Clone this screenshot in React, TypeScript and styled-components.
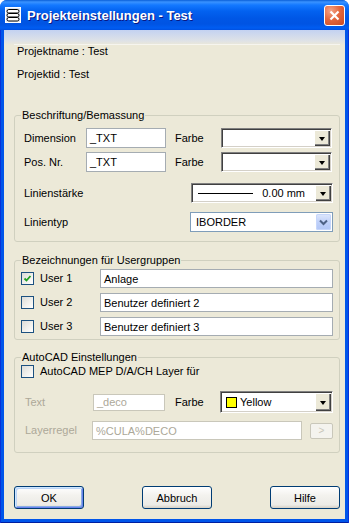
import styled, { createGlobalStyle } from "styled-components";

const GlobalStyle = createGlobalStyle`
  html, body {
    margin: 0;
    padding: 0;
    background: #ffffff;
  }
  body {
    font-family: "Liberation Sans", Arial, sans-serif;
    font-size: 11px;
    color: #000;
  }
`;

const Window = styled.div`
  width: 349px;
  height: 523px;
  display: flex;
  flex-direction: column;
  border-radius: 7px 7px 0 0;
  overflow: hidden;
  background: #0055ea;
`;

const TitleBar = styled.div`
  height: 30px;
  flex: none;
  display: flex;
  align-items: center;
  padding: 0 4px 0 5px;
  background: linear-gradient(
    to bottom,
    #0a5fd8 0px,
    #3a93ff 2px,
    #1479ff 5px,
    #0362f0 11px,
    #0057e6 18px,
    #0054e3 24px,
    #005df2 28px,
    #0050e0 30px
  );
`;

const TitleText = styled.div`
  flex: 1;
  margin-left: 6px;
  font-family: "Liberation Sans Narrow", "Liberation Sans", Arial, sans-serif;
  font-weight: bold;
  font-size: 13px;
  color: #fff;
  text-shadow: 1px 1px 0 #0a1883;
`;

const CloseButton = styled.div`
  width: 21px;
  height: 21px;
  box-sizing: border-box;
  border: 1px solid #fff;
  border-radius: 3px;
  display: flex;
  align-items: center;
  justify-content: center;
  background: radial-gradient(circle at 30% 25%, #f4a488 0%, #e4683f 45%, #c94a22 100%);
`;

const Frame = styled.div`
  flex: 1;
  display: flex;
  padding: 0 4px 4px 4px;
  background: #0055ea;
  box-shadow: inset 1px 0 0 #0831d9, inset -1px 0 0 #0831d9, inset 0 -1px 0 #001ea0;
`;

const Client = styled.div`
  flex: 1;
  display: flex;
  flex-direction: column;
  padding: 15px 5px 0 10px;
  background: linear-gradient(to bottom, #c3d2f1 0px, #dfe2e6 11px, #ece9d8 15px);
`;

const Info = styled.div`
  display: flex;
  flex-direction: column;
  gap: 10px;
  padding-left: 3px;
  line-height: 13px;
  border-top: 1px solid #f6f5ef;
  margin-top: -1px;
`;

const Group = styled.fieldset<{ $mt: number; $pt: number; $pb: number }>`
  margin: ${(p) => p.$mt}px 0 0 0;
  padding: ${(p) => p.$pt}px 6px ${(p) => p.$pb}px 6px;
  border: 1px solid #d0d0bf;
  border-radius: 3px;
  min-inline-size: 0;
  display: flex;
  flex-direction: column;
`;

const Legend = styled.legend`
  padding: 0 1px;
  line-height: 13px;
  font-size: 11px;
`;

const Row = styled.div<{ $mt?: number; $h?: number }>`
  display: flex;
  align-items: center;
  height: ${(p) => p.$h ?? 20}px;
  margin-top: ${(p) => p.$mt ?? 0}px;
`;

const Label = styled.span<{ $w?: number; $ml?: number; $disabled?: boolean }>`
  width: ${(p) => (p.$w ? `${p.$w}px` : "auto")};
  flex: ${(p) => (p.$w ? "none" : 1)};
  margin-left: ${(p) => p.$ml ?? 0}px;
  color: ${(p) => (p.$disabled ? "#aca899" : "#000")};
  white-space: nowrap;
  line-height: 13px;
`;

const TextBox = styled.div<{ $w: number; $h?: number; $disabled?: boolean }>`
  width: ${(p) => p.$w}px;
  height: ${(p) => p.$h ?? 20}px;
  box-sizing: border-box;
  flex: none;
  border: 1px solid ${(p) => (p.$disabled ? "#c9c7ba" : "#a5acb2")};
  background: #fff;
  padding-left: 3px;
  display: flex;
  align-items: center;
  color: ${(p) => (p.$disabled ? "#aca899" : "#000")};
  white-space: nowrap;
`;

const ClassicCombo = styled.div<{ $w: number; $h?: number }>`
  width: ${(p) => p.$w}px;
  height: ${(p) => p.$h ?? 20}px;
  box-sizing: border-box;
  flex: none;
  display: flex;
  border: 1px solid;
  border-color: #808080 #ffffff #ffffff #808080;
  padding: 1px;
  background: #fff;
  box-shadow: inset 1px 1px 0 #404040, inset -1px -1px 0 #d4d0c8;
`;

const ComboValue = styled.div`
  flex: 1;
  display: flex;
  align-items: center;
  padding-left: 4px;
  white-space: nowrap;
  overflow: hidden;
`;

const ClassicButton = styled.div`
  width: 16px;
  flex: none;
  display: flex;
  align-items: center;
  justify-content: center;
  background: #ece9d8;
  box-shadow: inset 1px 1px 0 #fff, inset -1px -1px 0 #404040, inset -2px -2px 0 #808080;
`;

const Arrow = styled.span`
  width: 0;
  height: 0;
  border-left: 3.5px solid transparent;
  border-right: 3.5px solid transparent;
  border-top: 4px solid #000;
  margin-top: 1px;
`;

const XPCombo = styled.div<{ $w: number }>`
  width: ${(p) => p.$w}px;
  height: 20px;
  box-sizing: border-box;
  flex: none;
  display: flex;
  border: 1px solid #7f9db9;
  padding: 1px;
  background: #fff;
`;

const XPButton = styled.div`
  width: 15px;
  flex: none;
  border-radius: 2px;
  display: flex;
  align-items: center;
  justify-content: center;
  background: linear-gradient(to bottom, #dfe8fd, #c0d1f9 50%, #b1c6f6);
  box-shadow: inset 0 0 0 1px #c6d6fb;
`;

const Swatch = styled.span`
  width: 9px;
  height: 9px;
  border: 1px solid #000;
  background: #ffff00;
  margin-right: 3px;
  flex: none;
`;

const LineSample = styled.span`
  width: 55px;
  height: 1px;
  background: #000;
  margin-left: 1px;
  flex: none;
`;

const WidthValue = styled.span`
  flex: 1;
  text-align: right;
  padding-right: 10px;
`;

const CheckBox = styled.span`
  width: 13px;
  height: 13px;
  box-sizing: border-box;
  flex: none;
  border: 1px solid #1c5180;
  background: linear-gradient(135deg, #dcdcd7 0%, #f2f2ef 60%, #ffffff 100%);
  display: flex;
  align-items: center;
  justify-content: center;
`;

const SmallButton = styled.div`
  width: 23px;
  height: 16px;
  box-sizing: border-box;
  margin-left: 8px;
  flex: none;
  border: 1px solid #c9c7ba;
  border-radius: 2px;
  background: #f4f3ee;
  color: #c9c7ba;
  display: flex;
  align-items: center;
  justify-content: center;
  font-size: 10px;
`;

const ButtonRow = styled.div`
  display: flex;
  justify-content: space-between;
  margin-top: 33px;
`;

const PushButton = styled.div<{ $default?: boolean }>`
  width: 70px;
  height: 23px;
  box-sizing: border-box;
  border: 1px solid #003c74;
  border-radius: 3px;
  display: flex;
  align-items: center;
  justify-content: center;
  background: linear-gradient(to bottom, #ffffff 0%, #f3f2ee 40%, #ecebe6 85%, #d6d0c5 100%);
  box-shadow: ${(p) =>
    p.$default
      ? "inset 1px 1px 0 #cee7ff, inset -1px -1px 0 #6982ee, inset 2px 2px 0 #bcd4f6, inset -2px -2px 0 #89ade4"
      : "none"};
`;

function AppIcon() {
  return (
    <svg width="16" height="16" viewBox="0 0 16 16">
      <rect x="0.5" y="0.5" width="15" height="15" fill="#dfe6f2" stroke="#ffffff" />
      <rect x="2" y="2.5" width="12" height="3.5" rx="1.75" fill="#fff" stroke="#000" />
      <rect x="2" y="6.5" width="12" height="3.5" rx="1.75" fill="#fff" stroke="#000" />
      <rect x="2" y="10.5" width="12" height="3.5" rx="1.75" fill="#fff" stroke="#000" />
    </svg>
  );
}

function Check({ checked }: { checked?: boolean }) {
  return (
    <CheckBox>
      {checked && (
        <svg width="9" height="9" viewBox="0 0 9 9">
          <path d="M1.5 4.5 L3.5 6.5 L7.5 2" fill="none" stroke="#21a121" strokeWidth="1.8" />
        </svg>
      )}
    </CheckBox>
  );
}

function Chevron() {
  return (
    <svg width="9" height="7" viewBox="0 0 9 7">
      <path d="M1 1.5 L4.5 5 L8 1.5" fill="none" stroke="#4d6185" strokeWidth="2" />
    </svg>
  );
}

const users = [
  { name: "User 1", value: "Anlage", checked: true },
  { name: "User 2", value: "Benutzer definiert 2" },
  { name: "User 3", value: "Benutzer definiert 3" },
];

export default function App() {
  return (
    <>
      <GlobalStyle />
      <Window>
        <TitleBar>
          <AppIcon />
          <TitleText>Projekteinstellungen - Test</TitleText>
          <CloseButton>
            <svg width="11" height="11" viewBox="0 0 11 11">
              <path d="M1.5 1.5 L9.5 9.5 M9.5 1.5 L1.5 9.5" stroke="#fff" strokeWidth="2.2" />
            </svg>
          </CloseButton>
        </TitleBar>
        <Frame>
          <Client>
            <Info>
              <span>Projektname : Test</span>
              <span>Projektid : Test</span>
            </Info>

            <Group $mt={28} $pt={6} $pb={9}>
              <Legend>Beschriftung/Bemassung</Legend>
              <Row>
                <Label $w={62} $ml={3}>Dimension</Label>
                <TextBox $w={80}>_TXT</TextBox>
                <Label $w={46} $ml={9}>Farbe</Label>
                <ClassicCombo $w={111}>
                  <ComboValue />
                  <ClassicButton><Arrow /></ClassicButton>
                </ClassicCombo>
              </Row>
              <Row $mt={4}>
                <Label $w={62} $ml={3}>Pos. Nr.</Label>
                <TextBox $w={80}>_TXT</TextBox>
                <Label $w={46} $ml={9}>Farbe</Label>
                <ClassicCombo $w={111}>
                  <ComboValue />
                  <ClassicButton><Arrow /></ClassicButton>
                </ClassicCombo>
              </Row>
              <Row $mt={11}>
                <Label $ml={3}>Linienstärke</Label>
                <ClassicCombo $w={142}>
                  <ComboValue>
                    <LineSample />
                    <WidthValue>0.00 mm</WidthValue>
                  </ComboValue>
                  <ClassicButton><Arrow /></ClassicButton>
                </ClassicCombo>
              </Row>
              <Row $mt={9}>
                <Label $ml={3}>Linientyp</Label>
                <XPCombo $w={143}>
                  <ComboValue>IBORDER</ComboValue>
                  <XPButton><Chevron /></XPButton>
                </XPCombo>
              </Row>
            </Group>

            <Group $mt={12} $pt={2} $pb={3}>
              <Legend>Bezeichnungen für Usergruppen</Legend>
              {users.map((u, i) => (
                <Row key={u.name} $h={19} $mt={i === 0 ? 0 : 5}>
                  <Check checked={u.checked} />
                  <Label $w={60} $ml={6}>{u.name}</Label>
                  <TextBox $w={233} $h={19}>{u.value}</TextBox>
                </Row>
              ))}
            </Group>

            <Group $mt={11} $pt={1} $pb={12}>
              <Legend>AutoCAD Einstellungen</Legend>
              <Row $h={13}>
                <Check />
                <Label $ml={6}>AutoCAD MEP D/A/CH Layer für</Label>
              </Row>
              <Row $h={22} $mt={13}>
                <Label $w={68} $ml={4} $disabled>Text</Label>
                <TextBox $w={72} $h={17} $disabled>_deco</TextBox>
                <Label $w={45} $ml={10}>Farbe</Label>
                <ClassicCombo $w={113} $h={22}>
                  <ComboValue>
                    <Swatch />
                    Yellow
                  </ComboValue>
                  <ClassicButton><Arrow /></ClassicButton>
                </ClassicCombo>
              </Row>
              <Row $h={19} $mt={8}>
                <Label $w={67} $ml={4} $disabled>Layerregel</Label>
                <TextBox $w={210} $h={19} $disabled>%CULA%DECO</TextBox>
                <SmallButton>&gt;</SmallButton>
              </Row>
            </Group>

            <ButtonRow>
              <PushButton $default>OK</PushButton>
              <PushButton>Abbruch</PushButton>
              <PushButton>Hilfe</PushButton>
            </ButtonRow>
          </Client>
        </Frame>
      </Window>
    </>
  );
}
